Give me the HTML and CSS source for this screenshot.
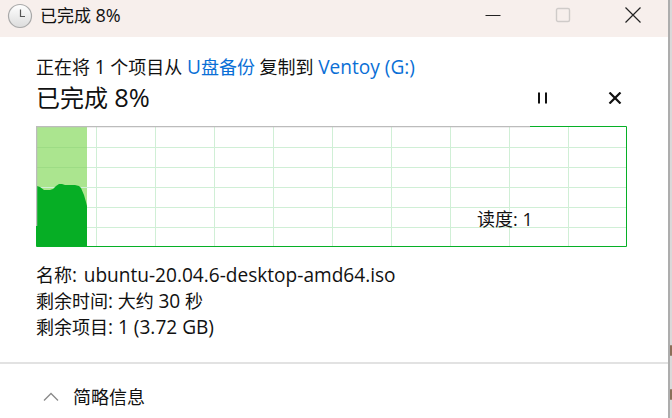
FILE: index.html
```html
<!DOCTYPE html>
<html lang="zh-CN">
<head>
  <meta charset="UTF-8" />
  <title>已完成 8%</title>
  <link rel="stylesheet" href="styles.css">
</head>
<body>
  <div class="window">
    <div class="titlebar">
      <svg class="clock" width="26" height="26" viewBox="0 0 26 26">
        <defs>
          <linearGradient id="clock-face" x1="0" y1="0" x2="0" y2="1">
            <stop offset="0" stop-color="#ffffff"/>
            <stop offset="1" stop-color="#dcdcdc"/>
          </linearGradient>
        </defs>
        <circle cx="13" cy="13" r="11.5" fill="url(#clock-face)" stroke="#a9a9a9" stroke-width="1.2"/>
        <path d="M13.5 6.5V13.5H18" fill="none" stroke="#555" stroke-width="1.2"/>
      </svg>
      <span class="title-text">已完成 <span class="lat">8%</span></span>
      <div class="win-buttons">
        <svg width="16" height="16" viewBox="0 0 16 16"><path d="M0.5 8.5H15.5" stroke="#222" stroke-width="1"/></svg>
        <svg width="16" height="16" viewBox="0 0 16 16"><rect x="1.5" y="1.5" width="13" height="13" rx="1.5" fill="none" stroke="#cfcbc9" stroke-width="1.4"/></svg>
        <svg width="16" height="16" viewBox="0 0 16 16"><path d="M0.5 0.5L15.5 15.5M15.5 0.5L0.5 15.5" stroke="#222" stroke-width="1.2"/></svg>
      </div>
    </div>

    <div class="content">
      <div class="copy-line">正在将 <span class="lat">1</span> 个项目从 <a class="link"><span class="lat">U</span>盘备份</a> 复制到 <a class="link"><span class="lat">Ventoy (G:)</span></a></div>
      <div class="progress-row">
        <span class="progress-text">已完成 <span class="lat">8%</span></span>
        <div class="progress-actions">
          <svg width="12" height="12" viewBox="0 0 12 12"><path d="M2 0.5V11.5M9 0.5V11.5" stroke="#111" stroke-width="2"/></svg>
          <svg width="14" height="12" viewBox="0 0 14 12"><path d="M1.5 0.5L12.5 11.5M12.5 0.5L1.5 11.5" stroke="#111" stroke-width="2.2"/></svg>
        </div>
      </div>

      <div class="graph">
        <svg width="591" height="121" viewBox="0 0 591 121">
          <rect x="1" y="1" width="50" height="120" fill="#abe58f"/>
          <path d="M60.5 1V120M119.5 1V120M178.5 1V120M237.5 1V120M296.5 1V120M355.5 1V120M414.5 1V120M473.5 1V120M532.5 1V120" stroke="#d0efd6" stroke-width="1" fill="none"/>
          <path d="M1 21.500H590M1 41.500H590M1 61.500H590M1 81.500H590M1 101.500H590" stroke="#d0efd6" stroke-width="1" fill="none"/>
          <path d="M1 21.500H51M1 41.500H51" stroke="#9ddc85" stroke-width="1" fill="none"/>
          <path d="M1 60L4 61L8 64L14 64L17 63L20 60L23 58L26 58L29 59L39 59L43 60L45 62L48 69L50 76L51 80V121H1Z" fill="#06ae25"/>
          <path d="M0.500 100V0.500H494" stroke="#bcbcbc" stroke-width="1.500" fill="none"/>
          <path d="M494 0.500H590.500V120.500H0.500V100" stroke="#06b026" stroke-width="1" fill="none"/>
        </svg>
        <span class="speed">读度: 1</span>
      </div>

      <div class="details">
        <div>名称<span class="lat">:</span> <span class="lat file-name">ubuntu-20.04.6-desktop-amd64.iso</span></div>
        <div>剩余时间<span class="lat">:</span> 大约 <span class="lat">30</span> 秒</div>
        <div>剩余项目<span class="lat">: 1 (3.72 GB)</span></div>
      </div>
    </div>

    <div class="footer">
      <svg width="16" height="9" viewBox="0 0 16 9"><path d="M1 8.500L8 1.500L15 8.500" fill="none" stroke="#8a8a8a" stroke-width="1.300"/></svg>
      <span>简略信息</span>
    </div>

    <span class="edge-mark edge-mark-top"></span>
    <span class="edge-mark edge-mark-bottom"></span>
  </div>
</body>
</html>
```

FILE: styles.css
```css
html, body {
  margin: 0;
  height: 100%;
  overflow: hidden;
}

body {
  font-family: "Open Sans", "Noto Sans CJK SC", sans-serif;
  background: #fff;
  color: #111;
}

.lat {
  font-size: 1.06em;
}

.file-name {
  margin-left: 2px;
}

.window {
  position: relative;
  width: 668px;
  height: 418px;
  border-right: 2px solid #adadad;
  box-shadow: 2px 0 0 #d9d9d9;
  display: flex;
  flex-direction: column;
}

.edge-mark {
  position: absolute;
  left: 670px;
  width: 2px;
  height: 11px;
  border-radius: 1px;
  background: #8a6f58;
}

.edge-mark-top {
  top: 345px;
}

.edge-mark-bottom {
  top: 389px;
}

.titlebar {
  box-sizing: border-box;
  height: 37px;
  background: #f7efec;
  display: flex;
  align-items: center;
  padding: 0 0 6px 7px;
  flex-shrink: 0;
}

.clock {
  margin-right: 7px;
}

.title-text {
  font-size: 17px;
  line-height: 24px;
}

.win-buttons {
  margin-left: auto;
  display: flex;
  gap: 54px;
  padding-right: 27px;
  align-items: center;
  margin-top: -2px;
}

.content {
  padding: 18px 41px 0 36px;
  flex: 1;
}

.copy-line {
  font-size: 18px;
  line-height: 24px;
}

.link {
  color: #0a6fd6;
}

.progress-row {
  display: flex;
  align-items: center;
  height: 34px;
}

.progress-text {
  font-size: 24px;
  color: #111;
}

.progress-actions {
  margin-left: auto;
  display: flex;
  gap: 59px;
  align-items: center;
  margin-right: 5px;
  padding-top: 4px;
}

.graph {
  position: relative;
  width: 591px;
  height: 121px;
  margin-top: 13px;
}

.graph svg {
  display: block;
}

.speed {
  position: absolute;
  left: 441px;
  top: 81px;
  font-size: 18px;
  line-height: 24px;
  color: #111;
}

.details {
  margin-top: 15px;
  font-size: 18px;
  line-height: 26px;
}

.footer {
  box-sizing: border-box;
  height: 56px;
  border-top: 2px solid #e2e2e2;
  display: flex;
  align-items: center;
  padding: 10px 0 0 43px;
  gap: 14px;
  font-size: 18px;
  flex-shrink: 0;
}
```
